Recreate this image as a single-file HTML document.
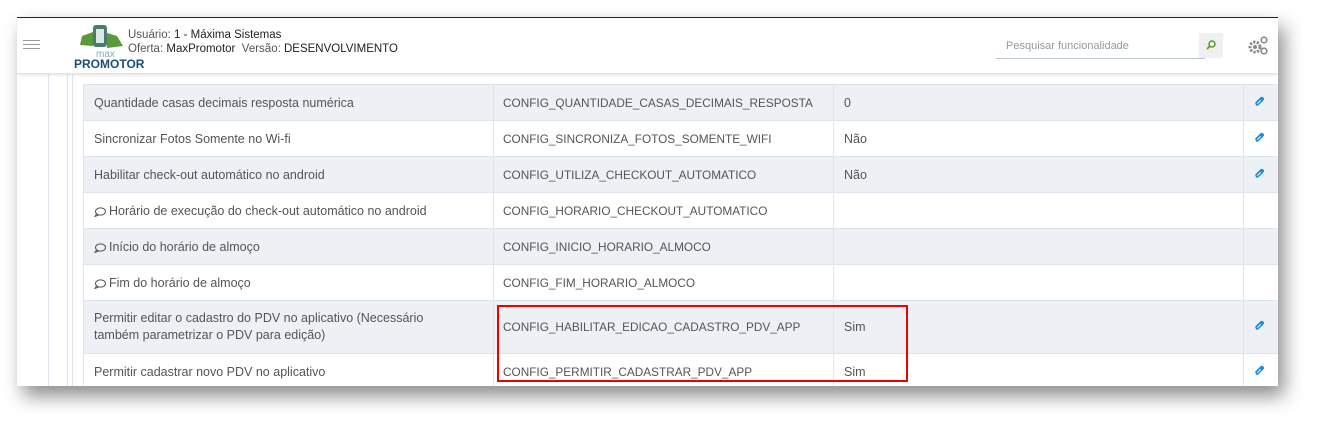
<!DOCTYPE html>
<html><head><meta charset="utf-8"><style>
*{margin:0;padding:0;box-sizing:border-box}
body{width:1327px;height:434px;background:#fff;font-family:"Liberation Sans",sans-serif;position:relative;overflow:hidden}
.shot{position:absolute;left:17px;top:17px;width:1261px;height:369px;background:#fff;border-top:1px solid #222;box-shadow:6px 10px 18px rgba(0,0,0,.45);overflow:hidden}
.hdr{position:absolute;left:0;top:0;width:100%;height:56px;background:#fff;border-bottom:1px solid #e3e3e3;box-shadow:0 1px 3px rgba(0,0,0,.12);z-index:2}
.vl{position:absolute;top:56px;bottom:0;width:1px;background:#dde3ea}
table{position:absolute;left:66px;top:66px;border-collapse:collapse;table-layout:fixed;width:1195px;font-size:12.5px;color:#555}
td{border:1px solid #dfe5ec;padding:0 10px;height:36px;vertical-align:middle;white-space:nowrap}
td:nth-child(2){font-size:11.8px;padding-left:9px}
tr.g td{background:#edf0f5}
.c{display:inline-block;vertical-align:-2px;margin-right:3px}
</style></head><body>
<svg width="0" height="0" style="position:absolute"><defs>
<symbol id="pen" viewBox="0 0 10 10"><path d="M2 9 L1 6 L6 1 Q8 0 9 2 Q9.5 3.5 8 4.5 L4 8.5 Z" fill="#1a8fe0"/><path d="M3 7 L6 4" stroke="#fff" stroke-width="0.9"/></symbol>
<symbol id="cm" viewBox="0 0 12 10"><ellipse cx="6.5" cy="4.5" rx="5" ry="3.6" fill="none" stroke="#555" stroke-width="1"/><path d="M2.5 7 L1 9.5 L4.5 8" fill="none" stroke="#555" stroke-width="1"/></symbol>
</defs></svg>
<div class="shot">
 <div class="hdr">
  <div style="position:absolute;left:6px;top:22px;width:17px;height:1px;background:#999;box-shadow:0 4px 0 #999,0 8px 0 #999"></div>
  <svg style="position:absolute;left:60px;top:6px" width="52" height="34" viewBox="0 0 52 34">
   <rect x="16" y="1" width="14" height="22" rx="3" fill="#4a7a70"/><rect x="19" y="5" width="8" height="14" fill="#dbe9e4"/>
   <path d="M30 9 L40 12 L46 22 L30 24 Z" fill="#5a9a3a"/><path d="M5 12 L16 8 L16 22 L3 21 Z" fill="#5a9a3a"/>
   <text x="19" y="33" font-size="10" fill="#8ab" font-family="Liberation Sans">max</text>
  </svg>
  <div style="position:absolute;left:57px;top:39px;font-weight:bold;font-size:12px;color:#1a4d7a">PROMOTOR</div>
  <div style="position:absolute;left:111px;top:10px;font-size:11.5px;color:#555;line-height:14px">Usuário: <span style="color:#222">1 - Máxima Sistemas</span><br>Oferta: <span style="color:#222">MaxPromotor</span>&nbsp;&nbsp;Versão: <span style="color:#222">DESENVOLVIMENTO</span></div>
  <div style="position:absolute;left:979px;top:15px;width:209px;height:26px;border-bottom:1px solid #b8c4d0;font-size:11px;color:#999;padding:7px 10px">Pesquisar funcionalidade</div>
  <div style="position:absolute;left:1182px;top:15px;width:24px;height:25px;background:#f0f0f0"><svg width="24" height="25"><circle cx="13" cy="11" r="3" fill="none" stroke="#5a9a2a" stroke-width="1.5"/><path d="M11 13 L8 16" stroke="#5a9a2a" stroke-width="1.8"/></svg></div>
  <svg style="position:absolute;left:1230px;top:17px" width="22" height="22" viewBox="0 0 22 22">
   <circle cx="8" cy="12" r="5" fill="none" stroke="#888" stroke-width="3" stroke-dasharray="2.2 1.4"/><circle cx="8" cy="12" r="2" fill="#888"/>
   <circle cx="17" cy="5" r="2.8" fill="none" stroke="#888" stroke-width="1.6"/><circle cx="17" cy="16" r="2.8" fill="none" stroke="#888" stroke-width="1.6"/>
  </svg>
 </div>
 <div class="vl" style="left:31px"></div><div class="vl" style="left:50px"></div><div class="vl" style="left:55px"></div>
 <table>
  <colgroup><col style="width:410px"><col style="width:340px"><col style="width:410px"><col style="width:35px"></colgroup>
  <tr class="g"><td>Quantidade casas decimais resposta numérica</td><td>CONFIG_QUANTIDADE_CASAS_DECIMAIS_RESPOSTA</td><td>0</td><td><svg width="11" height="11"><use href="#pen"/></svg></td></tr>
  <tr><td>Sincronizar Fotos Somente no Wi-fi</td><td>CONFIG_SINCRONIZA_FOTOS_SOMENTE_WIFI</td><td>Não</td><td><svg width="11" height="11"><use href="#pen"/></svg></td></tr>
  <tr class="g"><td>Habilitar check-out automático no android</td><td>CONFIG_UTILIZA_CHECKOUT_AUTOMATICO</td><td>Não</td><td><svg width="11" height="11"><use href="#pen"/></svg></td></tr>
  <tr><td><svg class="c" width="12" height="10"><use href="#cm"/></svg>Horário de execução do check-out automático no android</td><td>CONFIG_HORARIO_CHECKOUT_AUTOMATICO</td><td></td><td></td></tr>
  <tr class="g"><td><svg class="c" width="12" height="10"><use href="#cm"/></svg>Início do horário de almoço</td><td>CONFIG_INICIO_HORARIO_ALMOCO</td><td></td><td></td></tr>
  <tr><td><svg class="c" width="12" height="10"><use href="#cm"/></svg>Fim do horário de almoço</td><td>CONFIG_FIM_HORARIO_ALMOCO</td><td></td><td></td></tr>
  <tr class="g"><td style="height:53px;line-height:17px">Permitir editar o cadastro do PDV no aplicativo (Necessário<br>também parametrizar o PDV para edição)</td><td>CONFIG_HABILITAR_EDICAO_CADASTRO_PDV_APP</td><td>Sim</td><td><svg width="11" height="11"><use href="#pen"/></svg></td></tr>
  <tr><td>Permitir cadastrar novo PDV no aplicativo</td><td>CONFIG_PERMITIR_CADASTRAR_PDV_APP</td><td>Sim</td><td><svg width="11" height="11"><use href="#pen"/></svg></td></tr>
 </table>
 <div style="position:absolute;left:480px;top:287px;width:411px;height:77px;border:2px solid #e00;z-index:3"></div>
</div>
</body></html>
